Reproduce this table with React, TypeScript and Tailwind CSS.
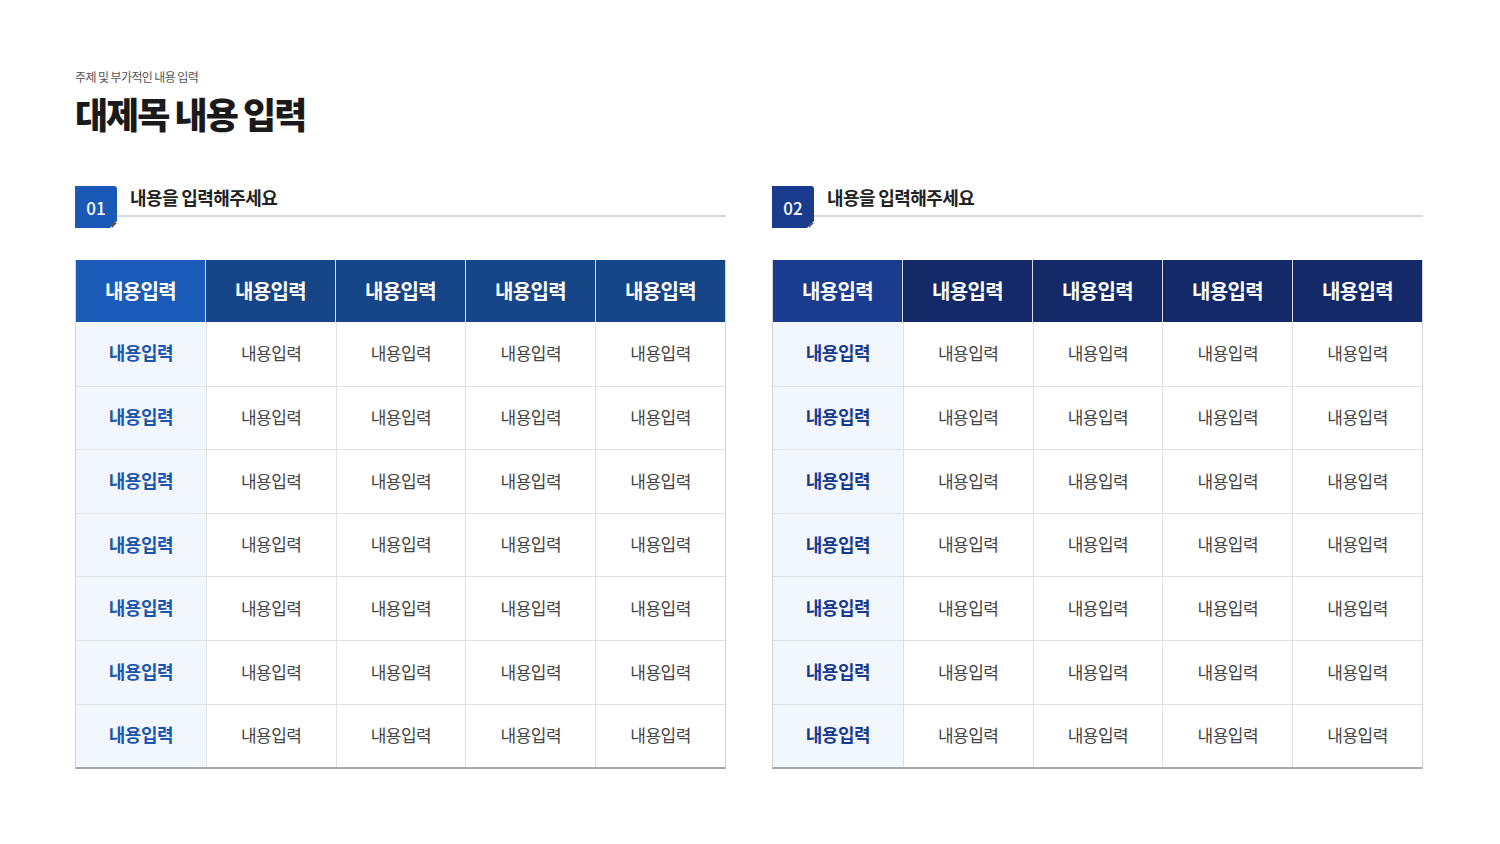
const rows = Array.from({ length: 7 });
const cols = Array.from({ length: 4 });

type Theme = {
  badge: string;
  headFirst: string;
  head: string;
  firstText: string;
};

const themes: Theme[] = [
  { badge: 'bg-[#1a5ab6]', headFirst: 'bg-[#1a5cb8]', head: 'bg-[#164688]', firstText: 'text-[#1a55b0]' },
  { badge: 'bg-[#1a3a8e]', headFirst: 'bg-[#1b3b8f]', head: 'bg-[#142a68]', firstText: 'text-[#1a3a8e]' },
];

function Section({ num, theme }: { num: string; theme: Theme }) {
  return (
    <div className="w-[651px]">
      <div className="flex items-start h-[42px]">
        <div className={`relative w-[42px] h-[42px] ${theme.badge} rounded-tr-[3px] flex items-center justify-center`}>
          <span className="text-white text-[17px] font-medium leading-none">{num}</span>
          <div className="absolute right-0 bottom-0 w-0 h-0 border-l-[7px] border-l-transparent border-b-[7px] border-b-white" />
          <div className="absolute right-[0px] bottom-[0px] w-[5px] h-[5px] bg-[#555] [clip-path:polygon(0_0,100%_0,0_100%)]" />
        </div>
        <div className="flex-1 h-[31px] border-b-2 border-[#d9d9d9] pl-[13px] flex items-center">
          <span className="text-[18px] font-bold text-[#222] leading-[22px] -mt-[8px] tracking-[-0.6px]">내용을 입력해주세요</span>
        </div>
      </div>
      <div className="mt-[32px] border-l border-r border-[#d4d4d4] border-b-2 border-b-[#a9a9a9]">
        <div className="grid grid-cols-5 h-[62px] gap-x-px bg-[#d8dde8]">
          <div className={`${theme.headFirst} flex items-center justify-center text-white text-[20px] font-bold tracking-[-0.6px]`}>내용입력</div>
          {cols.map((_, i) => (
            <div key={i} className={`${theme.head} flex items-center justify-center text-white text-[20px] font-bold tracking-[-0.6px]`}>내용입력</div>
          ))}
        </div>
        {rows.map((_, r) => (
          <div key={r} className={`grid grid-cols-5 h-[63.6px] ${r > 0 ? 'border-t border-[#e2e2e2]' : ''}`}>
            <div className={`bg-[#f2f6fd] flex items-center justify-center pb-[2px] ${theme.firstText} text-[18px] font-bold tracking-[-0.5px]`}>내용입력</div>
            {cols.map((_, i) => (
              <div key={i} className="border-l border-[#e2e2e2] flex items-center justify-center pb-[2px] text-[#444] text-[17px] tracking-[-0.5px]">내용입력</div>
            ))}
          </div>
        ))}
      </div>
    </div>
  );
}

export default function App() {
  return (
    <div className="w-[1500px] h-[844px] bg-white overflow-hidden font-['Noto_Sans_CJK_KR','Noto_Sans',sans-serif]">
      <div className="pl-[75px] pt-[69px]">
        <p className="text-[12px] text-[#555] tracking-[-0.6px] leading-[16px]">주제 및 부가적인 내용 입력</p>
        <h1 className="text-[36px] font-black text-[#1a1a1a] tracking-[-2px] leading-[42px] mt-[7px]">대제목 내용 입력</h1>
        <div className="flex gap-[46px] mt-[52px]">
          <Section num="01" theme={themes[0]} />
          <Section num="02" theme={themes[1]} />
        </div>
      </div>
    </div>
  );
}
